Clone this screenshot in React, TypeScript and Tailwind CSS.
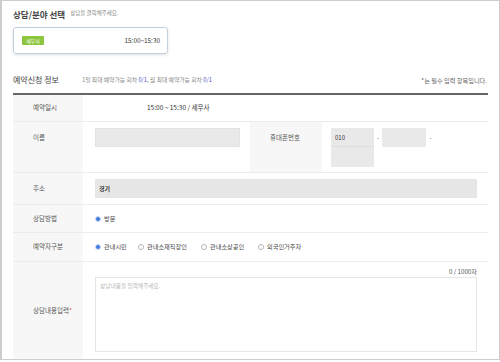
import React from "react";

const Radio = ({ checked }: { checked?: boolean }) =>
  checked ? (
    <span className="inline-flex w-[6px] h-[6px] rounded-full bg-[#3d7be0] border border-[#cfdcf3] shrink-0" />
  ) : (
    <span className="inline-flex w-[6px] h-[6px] rounded-full border border-[#b5b5b5] bg-white shrink-0" />
  );

export default function App() {
  return (
    <div className="w-[500px] h-[360px] border border-[#cdcdcd] border-l-2 bg-white font-['Noto_Sans_CJK_KR','Noto_Sans',sans-serif] text-[#444] overflow-hidden">
      <div className="pl-[11px] pr-[11px]">
        {/* title */}
        <div className="flex items-center h-[14px] mt-[6px] gap-[5px]">
          <span className="text-[8.5px] font-bold text-[#444] leading-none">상담/분야 선택</span>
          <span className="text-[5.5px] text-[#888] leading-none">상담을 클릭해주세요.</span>
        </div>
        {/* card */}
        <div className="mt-[6px] w-[155px] h-[27px] rounded-[3px] border border-[#c2cfdd] shadow-[0_1px_3px_rgba(0,0,0,0.12)] flex items-center justify-between pl-[8px] pr-[7px]">
          <span className="h-[9px] px-[4px] bg-[#8cc63f] text-white text-[5px] leading-[9px] rounded-[1px]">세무사</span>
          <span className="text-[6.4px] text-[#333] leading-none mt-[1px]">15:00~15:30</span>
        </div>
        {/* section header */}
        <div className="mt-[18px] h-[15px] flex items-center justify-between">
          <div className="flex items-center gap-[23px]">
            <span className="text-[8px] text-[#444] leading-none">예약신청 정보</span>
            <span className="text-[5.8px] text-[#888] leading-none">
              1일 최대 예약가능 회차 <span className="text-[#5458c9]">0/1</span>, 월 최대 예약가능 회차{" "}
              <span className="text-[#5458c9]">0/1</span>
            </span>
          </div>
          <span className="text-[6.2px] text-[#666] leading-none mt-[3px] mr-[1px]">*는 필수 입력 항목입니다.</span>
        </div>
        {/* table */}
        <div className="mt-[6px] border-t-2 border-[#666] text-[6.5px]">
          {/* row 1 */}
          <div className="flex h-[27px] border-b border-[#ececec]">
            <div className="w-[70px] bg-[#f7f7f7] flex items-center pl-[20px] text-[#555]">예약일시</div>
            <div className="flex-1 flex items-center pl-[64px] text-[#333]">15:00 ~ 15:30 / 세무사</div>
          </div>
          {/* row 2 */}
          <div className="flex h-[51px] border-b border-[#ececec]">
            <div className="w-[70px] bg-[#f7f7f7] pl-[20px] pt-[11px] text-[#555]">이름</div>
            <div className="w-[167px] pl-[12px] pt-[6px]">
              <div className="w-[145px] h-[19px] bg-[#e9e9e9] border border-[#e2e2e2]" />
            </div>
            <div className="w-[72px] bg-[#f7f7f7] pl-[20px] pt-[11px] text-[#555]">휴대폰번호</div>
            <div className="flex-1 flex items-start pl-[9px] pt-[6px]">
              <div className="w-[43px] h-[39px] bg-[#e9e9e9] flex flex-col">
                <div className="h-[19px] flex items-center pl-[4px] text-[6px] text-[#333] border-b border-[#dedede]">010</div>
              </div>
              <span className="mx-[3px] leading-[19px] text-[#666]">-</span>
              <div className="w-[44px] h-[19px] bg-[#e9e9e9]" />
              <span className="ml-[3px] leading-[19px] text-[#666]">-</span>
            </div>
          </div>
          {/* row 3 */}
          <div className="flex h-[32px] border-b border-[#ececec]">
            <div className="w-[70px] bg-[#f7f7f7] flex items-center pl-[20px] text-[#555]">주소</div>
            <div className="flex-1 flex items-center pl-[12px]">
              <div className="w-[382px] h-[19px] bg-[#e6e6e6] flex items-center pl-[4px] text-[6px] text-[#333] font-bold">경기</div>
            </div>
          </div>
          {/* row 4 */}
          <div className="flex h-[28px] border-b border-[#ececec]">
            <div className="w-[70px] bg-[#f7f7f7] flex items-center pl-[20px] text-[#555]">상담방법</div>
            <div className="flex-1 flex items-center pl-[12px] gap-[3px] text-[6.2px] text-[#444]">
              <Radio checked />
              <span>방문</span>
            </div>
          </div>
          {/* row 5 */}
          <div className="flex h-[29px] border-b border-[#ececec]">
            <div className="w-[70px] bg-[#f7f7f7] flex items-center pl-[20px] text-[#555]">예약자구분</div>
            <div className="flex-1 flex items-center pl-[12px] text-[6.2px] text-[#444]">
              <Radio checked />
              <span className="ml-[3px] w-[34px]">관내시민</span>
              <Radio />
              <span className="ml-[3px] w-[54px]">관내소재직장인</span>
              <Radio />
              <span className="ml-[3px] w-[48px]">관내소상공인</span>
              <Radio />
              <span className="ml-[3px]">외국인거주자</span>
            </div>
          </div>
          {/* row 6 */}
          <div className="flex h-[97px]">
            <div className="w-[70px] bg-[#f7f7f7] flex items-center pl-[20px] text-[#555]">
              상담내용입력<span className="text-[#e0533a]">*</span>
            </div>
            <div className="flex-1 pl-[12px] pt-[6px]">
              <div className="w-[382px] flex justify-end text-[6.2px] text-[#555] leading-[8px]">0 / 1000자</div>
              <div className="w-[382px] h-[75px] border border-[#e6e6e6] mt-[1px] pl-[4px] pt-[4px] text-[5.7px] text-[#b5b5b5]">
                상담내용을 입력해주세요.
              </div>
            </div>
          </div>
        </div>
      </div>
    </div>
  );
}
